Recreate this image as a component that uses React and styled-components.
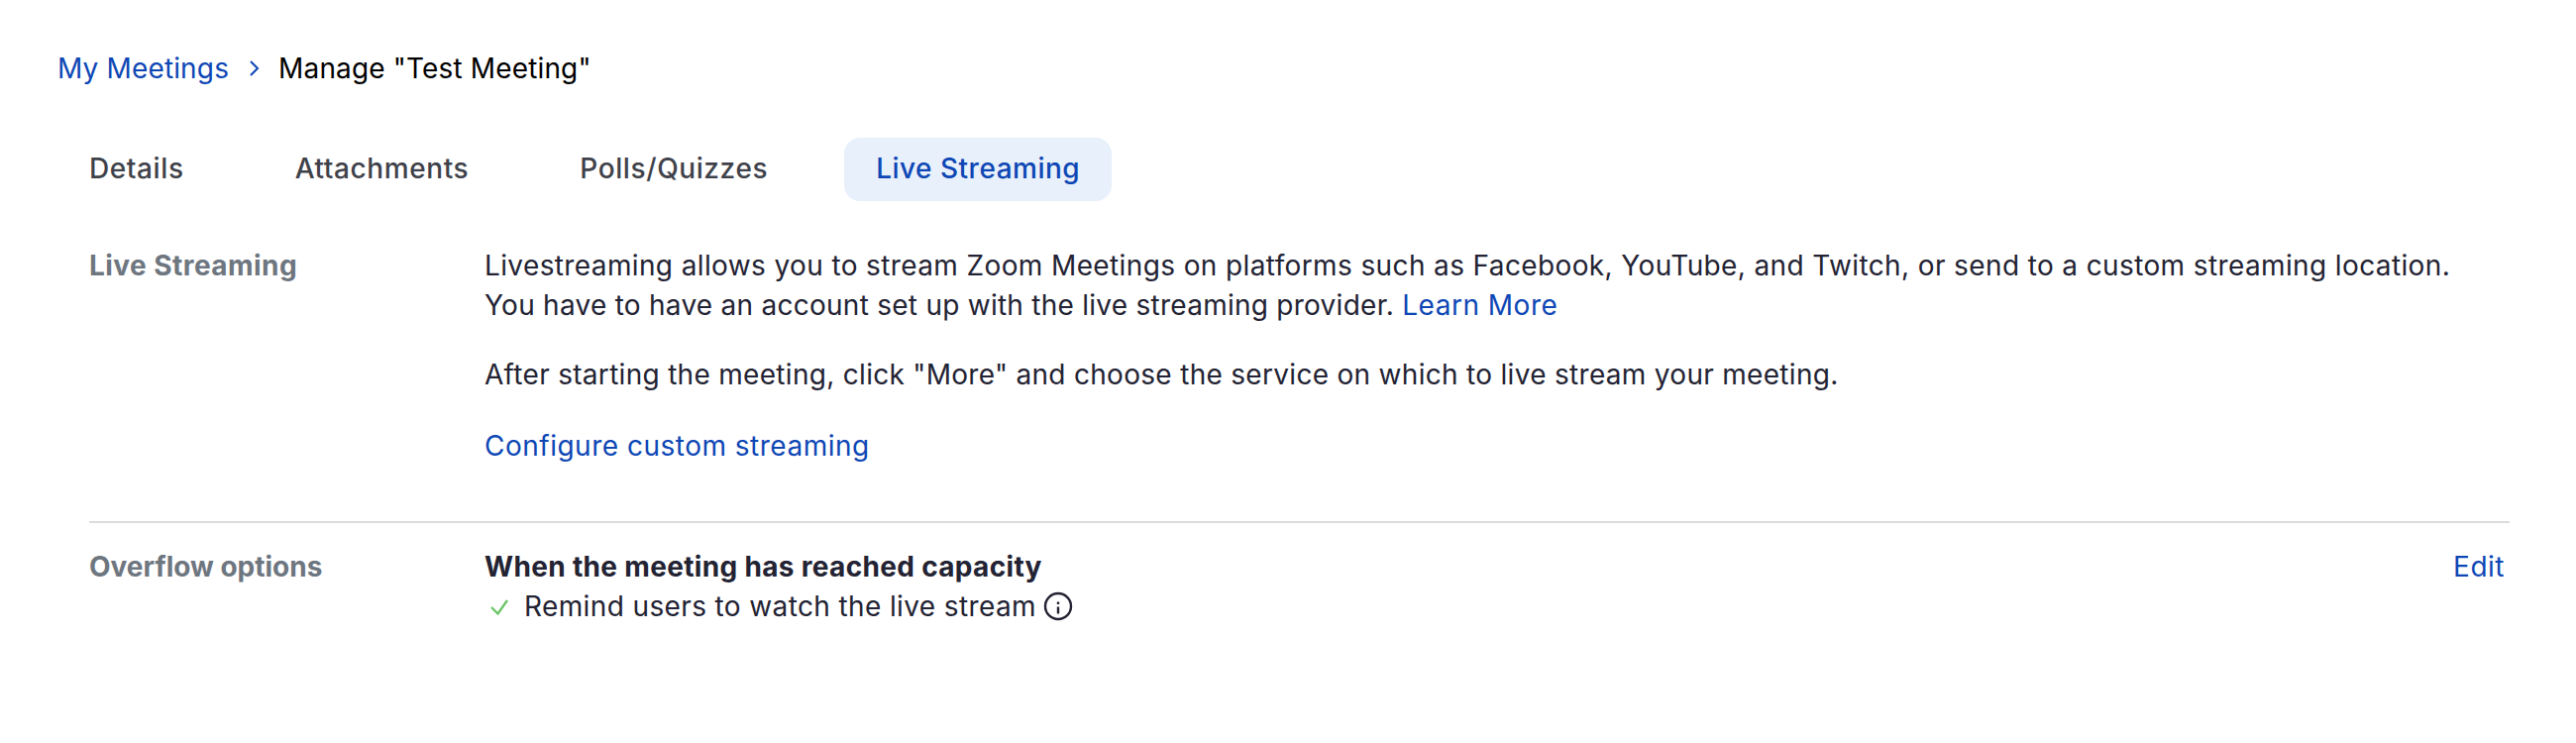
import React from 'react';
import styled, { createGlobalStyle } from 'styled-components';

const GlobalStyle = createGlobalStyle`
	html, body {
		margin: 0;
		background: #fff;
		font-family: Inter, "Liberation Sans", sans-serif;
	}
`;

const Page = styled.div`
	width: 2600px;
	height: 750px;
	box-sizing: border-box;
	padding: 49px 67px 0 58px;
`;
const Breadcrumb = styled.nav`
	display: flex;
	align-items: center;
	height: 40px;
	font-size: 28px;
	letter-spacing: 0.15px;
`;
const Crumb = styled.a`
	color: ${(p) => (p.$current ? '#000' : '#0e47b5')};
`;
const CrumbSep = styled.svg`
	width: 14px;
	height: 18px;
	margin: 0 18px 0 18px;
	fill: none;
	stroke: #0e47b5;
	stroke-width: 2;
`;
const Content = styled.div`
	padding-left: 32px;
`;
const Tabs = styled.div`
	display: flex;
	gap: 48px;
	margin-top: 50px;
`;
const Tab = styled.div`
	height: 64px;
	box-sizing: border-box;
	display: flex;
	align-items: center;
	padding: 0 32px 2px;
	margin-left: ${(p) => (p.$active ? '-3px' : '0')};
	border-radius: 16px;
	font-size: 28px;
	font-weight: 500;
	letter-spacing: ${(p) => (p.$active ? '0.5px' : '0.6px')};
	color: ${(p) => (p.$active ? '#0e47b5' : '#3f424a')};
	background: ${(p) => (p.$active ? '#e8f0fb' : 'transparent')};
`;
const Row = styled.section`
	display: grid;
	grid-template-columns: 399px 1fr auto;
	padding: ${(p) => p.$padding};
	border-bottom: ${(p) => (p.$divided ? '2px solid #dcdcdc' : 'none')};
`;
const Label = styled.div`
	font-size: 28px;
	line-height: 40px;
	font-weight: 700;
	letter-spacing: ${(p) => p.$tracking};
	color: #6e7680;
`;
const Body = styled.div`
	font-size: 28px;
	line-height: 40px;
	letter-spacing: 0.38px;
	color: #232333;
`;
const Para = styled.p`
	margin: 0 0 ${(p) => p.$after || '0'};
	white-space: nowrap;
`;
const Line = styled.span`
	letter-spacing: ${(p) => p.$tracking};
`;
const Link = styled.a`
	color: #0e47b5;
	letter-spacing: 0.5px;
`;
const Title = styled.div`
	font-weight: 700;
	letter-spacing: 0.33px;
`;
const Option = styled.div`
	display: flex;
	align-items: center;
`;
const Check = styled.svg`
	width: 24px;
	height: 24px;
	margin: 0 13px 0 3px;
	fill: none;
	stroke: #6cc765;
	stroke-width: 2.4;
`;
const InfoIcon = styled.svg`
	width: 32px;
	height: 32px;
	margin-left: 6px;
	fill: none;
	stroke: #232333;
	stroke-width: 2.4;
`;
const Edit = styled(Link)`
	font-size: 28px;
	line-height: 40px;
	margin-right: 5px;
`;

const App = () => (
	<Page>
		<GlobalStyle />
		<Breadcrumb>
			<Crumb>My Meetings</Crumb>
			<CrumbSep viewBox="0 0 14 18">
				<path d="M4 2l7 7-7 7" />
			</CrumbSep>
			<Crumb $current>Manage "Test Meeting"</Crumb>
		</Breadcrumb>
		<Tabs>
			<Tab>Details</Tab>
			<Tab>Attachments</Tab>
			<Tab>Polls/Quizzes</Tab>
			<Tab $active>Live Streaming</Tab>
		</Tabs>
		<Content>
			<Row $divided $padding="45px 0 56px">
				<Label $tracking="0.45px">Live Streaming</Label>
				<Body>
					<Para $after="30px">
						Livestreaming allows you to stream Zoom Meetings on platforms such as Facebook, YouTube, and Twitch, or send to a custom streaming location.
						<br />
						<Line $tracking="0.26px">You have to have an account set up with the live streaming provider.</Line> <Link>Learn More</Link>
					</Para>
					<Para $after="32px">
						<Line $tracking="0.3px">After starting the meeting, click "More" and choose the service on which to live stream your meeting.</Line>
					</Para>
					<Para>
						<Link>Configure custom streaming</Link>
					</Para>
				</Body>
				<span />
			</Row>
			<Row $padding="24px 0 0">
				<Label $tracking="0">Overflow options</Label>
				<Body>
					<Title>When the meeting has reached capacity</Title>
					<Option>
						<Check viewBox="0 0 24 24">
							<path d="M4 13l6.5 6.5L20 6" />
						</Check>
						Remind users to watch the live stream
						<InfoIcon viewBox="0 0 32 32">
							<circle cx="16" cy="16" r="13" />
							<path d="M16 16.5v7M16 11.5v2.4" />
						</InfoIcon>
					</Option>
				</Body>
				<Edit>Edit</Edit>
			</Row>
		</Content>
	</Page>
);

export default App;
